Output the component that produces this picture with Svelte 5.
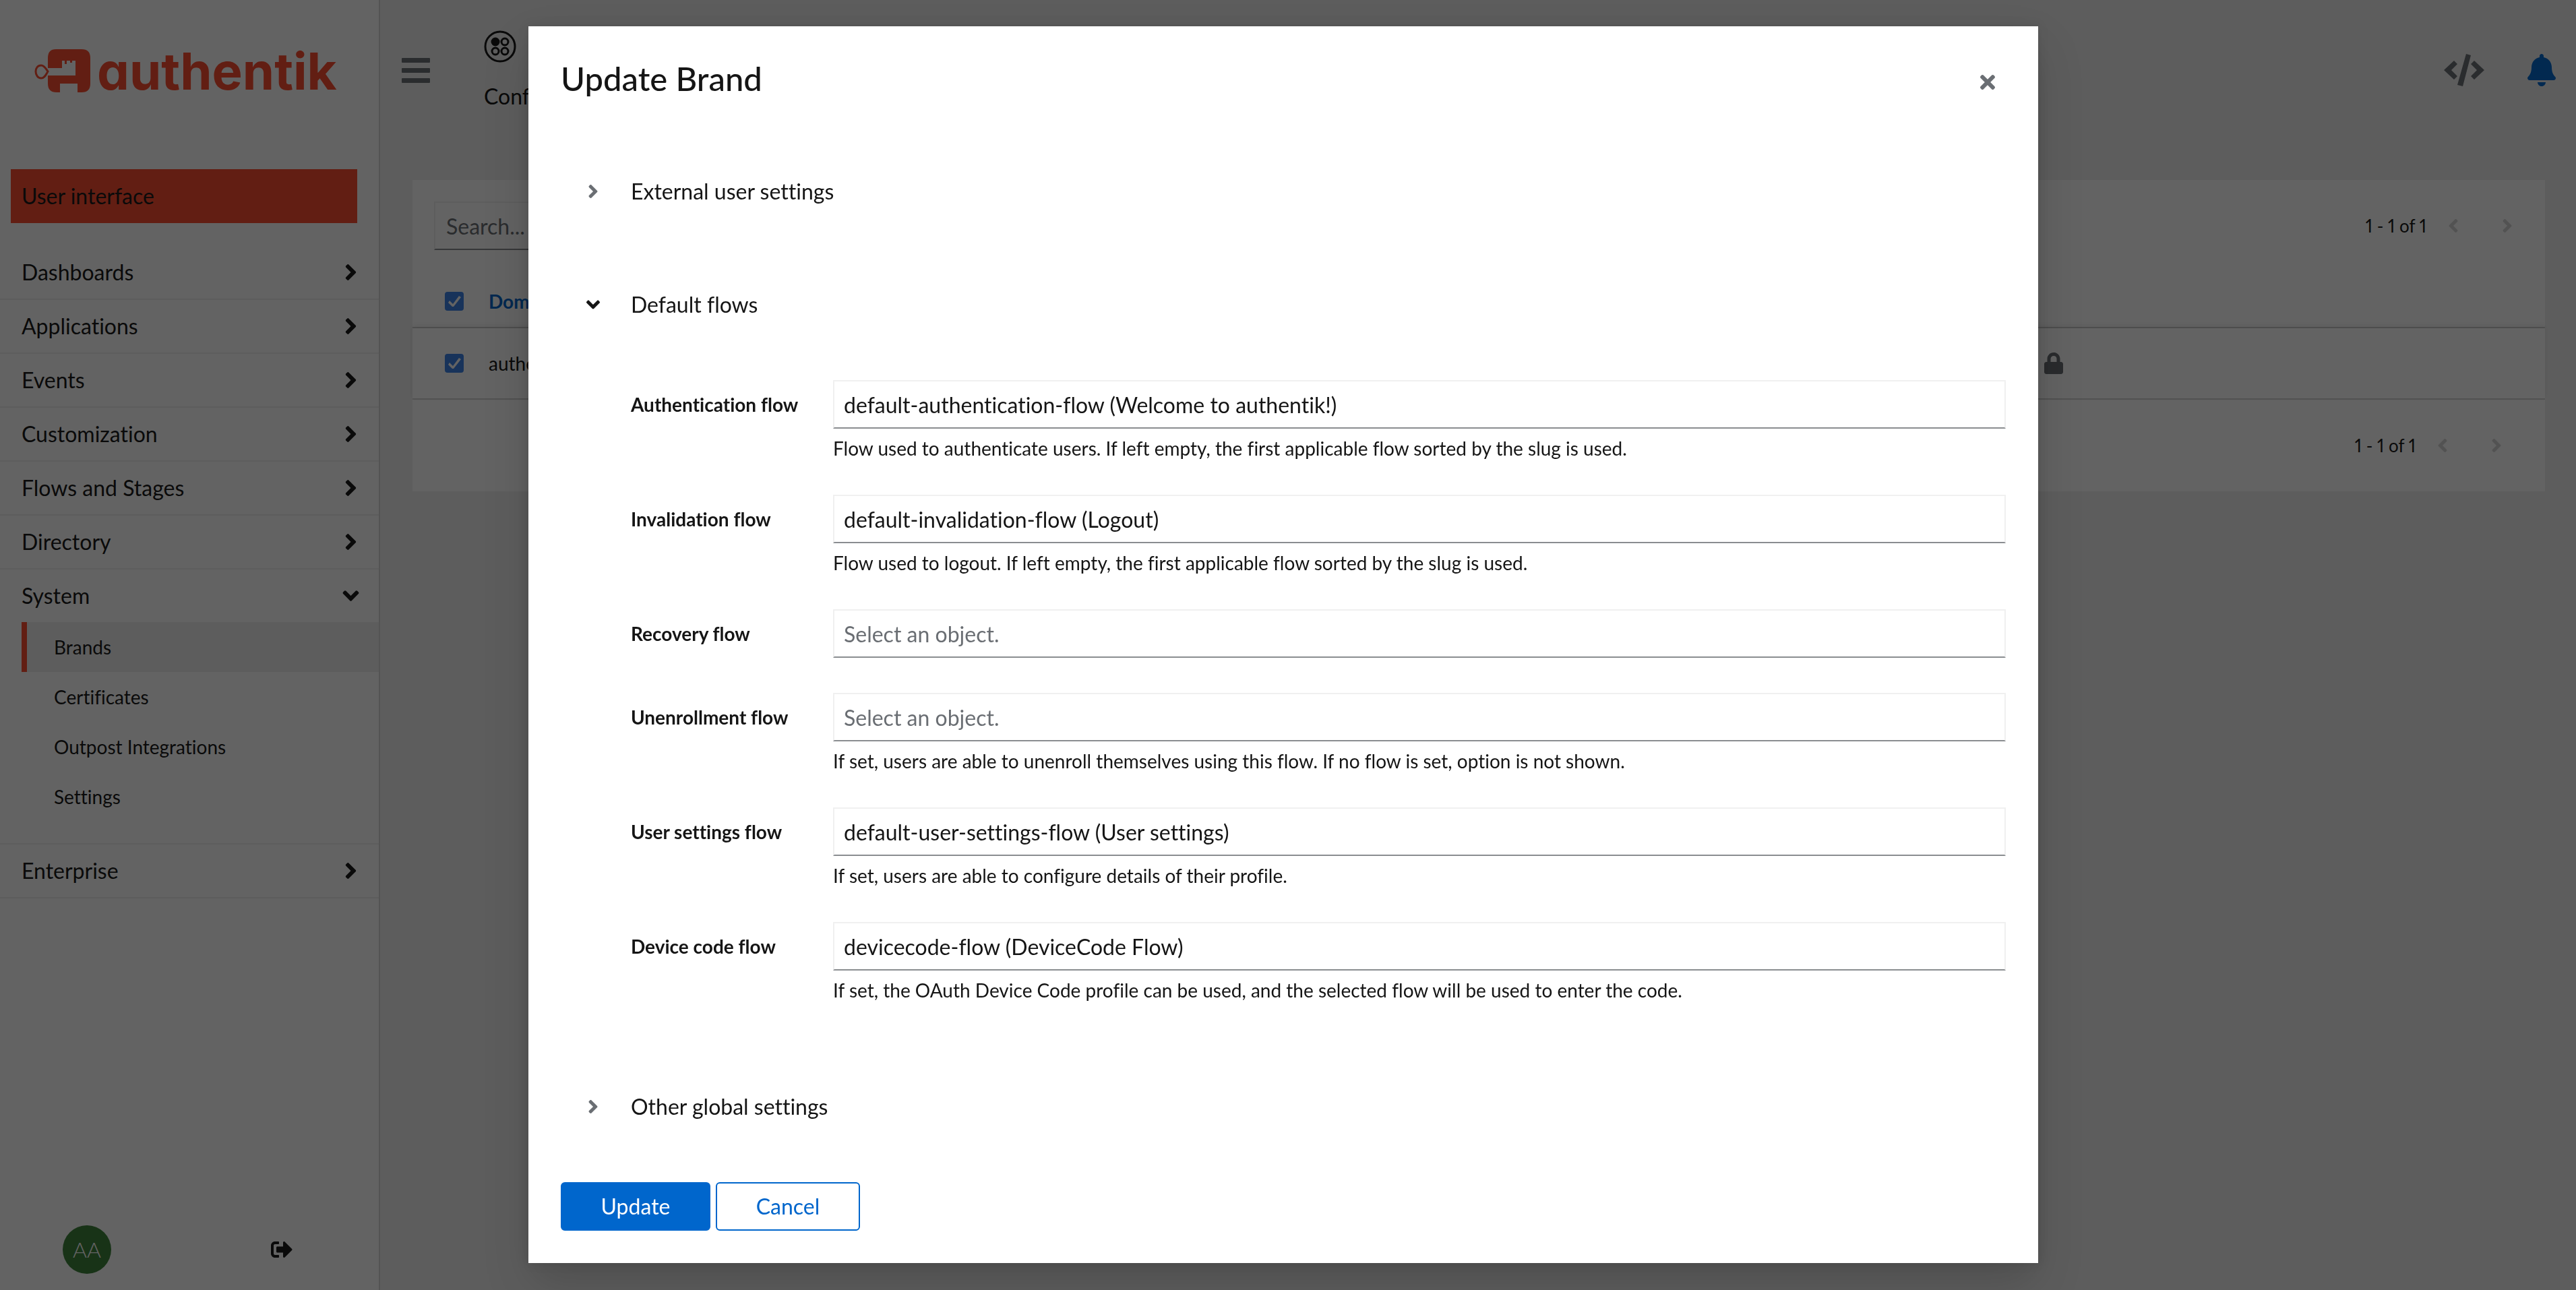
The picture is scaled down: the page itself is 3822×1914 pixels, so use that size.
<script>
  const sections = ['Dashboards', 'Applications', 'Events', 'Customization', 'Flows and Stages', 'Directory'];
  const systemPages = ['Brands', 'Certificates', 'Outpost Integrations', 'Settings'];

  let flows = $state([
    {
      id: 'authentication',
      label: 'Authentication flow',
      value: 'default-authentication-flow (Welcome to authentik!)',
      help: 'Flow used to authenticate users. If left empty, the first applicable flow sorted by the slug is used.'
    },
    {
      id: 'invalidation',
      label: 'Invalidation flow',
      value: 'default-invalidation-flow (Logout)',
      help: 'Flow used to logout. If left empty, the first applicable flow sorted by the slug is used.'
    },
    { id: 'recovery', label: 'Recovery flow', value: '', help: '' },
    {
      id: 'unenrollment',
      label: 'Unenrollment flow',
      value: '',
      help: 'If set, users are able to unenroll themselves using this flow. If no flow is set, option is not shown.'
    },
    {
      id: 'user-settings',
      label: 'User settings flow',
      value: 'default-user-settings-flow (User settings)',
      help: 'If set, users are able to configure details of their profile.'
    },
    {
      id: 'device-code',
      label: 'Device code flow',
      value: 'devicecode-flow (DeviceCode Flow)',
      help: 'If set, the OAuth Device Code profile can be used, and the selected flow will be used to enter the code.'
    }
  ]);
</script>

{#snippet angle(kind)}
  <svg class="angle {kind}" viewBox="0 0 256 512" aria-hidden="true">
    <path d="M224.3 273l-136 136c-9.4 9.4-24.6 9.4-33.9 0l-22.6-22.6c-9.4-9.4-9.4-24.6 0-33.9l96.4-96.4-96.4-96.4c-9.4-9.4-9.4-24.6 0-33.9L54.3 103c9.4-9.4 24.6-9.4 33.9 0l136 136c9.5 9.4 9.5 24.6.1 34z" />
  </svg>
{/snippet}

{#snippet pagination()}
  <div class="pagination">
    <span>1 - 1 of 1</span>
    <button type="button" aria-label="Previous page" disabled>{@render angle('left')}</button>
    <button type="button" aria-label="Next page" disabled>{@render angle('right')}</button>
  </div>
{/snippet}

<div class="page">
  <aside class="sidebar">
    <a class="brand" href="#home">
      <svg class="mark" viewBox="0 0 83 64" aria-hidden="true">
        <path d="M32 0H70Q83 0 83 13V51Q83 64 70 64H64V51H38V64H33Q20 64 20 51V39H61V17H56V20H53V17H48V22H45V17H41V28H20V13Q20 0 32 0Z" />
        <path class="ring" d="M10 24C15 24 17 29 20 33C17 38 15 43 10 43C5 43 2 38 2 33S5 24 10 24Z" />
      </svg>
      <span>authentik</span>
    </a>
    <nav>
      <a class="interface" href="#user">User interface</a>
      {#each sections as section}
        <button type="button" class="section">{section}{@render angle('right')}</button>
      {/each}
      <div class="open">
        <button type="button" class="section" aria-expanded="true">System{@render angle('down')}</button>
        {#each systemPages as name, i}
          <a class="sub" class:current={i === 0} href="#{name}">{name}</a>
        {/each}
      </div>
      <button type="button" class="section">Enterprise{@render angle('right')}</button>
    </nav>
    <div class="account">
      <span class="avatar">AA</span>
      <a href="#logout" aria-label="Sign out">
        <svg class="signout" viewBox="0 0 512 512" aria-hidden="true">
          <path d="M497 273L329 441c-15 15-41 4.5-41-17v-96H152c-13.3 0-24-10.7-24-24v-96c0-13.3 10.7-24 24-24h136V88c0-21.4 25.9-32 41-17l168 168c9.3 9.4 9.3 24.6 0 34zM192 436v-40c0-6.6-5.4-12-12-12H96c-17.7 0-32-14.3-32-32V160c0-17.7 14.3-32 32-32h84c6.6 0 12-5.4 12-12V76c0-6.6-5.4-12-12-12H96c-53 0-96 43-96 96v192c0 53 43 96 96 96h84c6.6 0 12-5.4 12-12z" />
        </svg>
      </a>
    </div>
  </aside>

  <main>
    <header class="masthead">
      <button type="button" aria-label="Toggle navigation">
        <svg class="bars" viewBox="0 0 42 37" aria-hidden="true">
          <rect width="42" height="7" rx="1" /><rect y="15" width="42" height="7" rx="1" /><rect y="30" width="42" height="7" rx="1" />
        </svg>
      </button>
      <div class="heading">
        <svg viewBox="0 0 48 48" aria-label="Brands">
          <circle cx="24" cy="24" r="22" /><circle class="dot" cx="17" cy="17" r="5" /><circle cx="31" cy="17" r="5" />
          <circle cx="17" cy="31" r="5" /><circle cx="31" cy="31" r="5" />
        </svg>
        <p>Config</p>
      </div>
      <button type="button" aria-label="API drawer">
        <svg class="code" viewBox="0 0 60 48" aria-hidden="true">
          <path d="M0 24L15 10L20 15L11 24L20 33L15 38ZM33 0L40 2L28 48L20 46ZM60 24L45 10L40 15L49 24L40 33L45 38Z" />
        </svg>
      </button>
      <button type="button" class="alerts" aria-label="Notifications">
        <svg class="bell" viewBox="0 0 448 512" aria-hidden="true">
          <path d="M224 512c35.32 0 63.97-28.65 63.97-64H160.03c0 35.35 28.65 64 63.97 64zm215.39-149.71c-19.32-20.76-55.47-51.99-55.47-154.29 0-77.7-54.48-139.9-127.94-155.16V32c0-17.67-14.32-32-31.98-32s-31.98 14.33-31.98 32v20.84C118.56 68.1 64.08 130.3 64.08 208c0 102.3-36.15 133.53-55.47 154.29-6 6.45-8.66 14.16-8.61 21.71.11 16.4 12.98 32 32.1 32h383.8c19.12 0 32-15.6 32.1-32 .05-7.55-2.61-15.27-8.61-21.71z" />
        </svg>
      </button>
    </header>

    <section class="panel">
      <div class="toolbar">
        <input type="search" aria-label="Search" placeholder="Search..." />
        {@render pagination()}
      </div>
      <table>
        <thead>
          <tr>
            <th class="check"><input type="checkbox" aria-label="Select all" checked /></th>
            <th>Domain</th>
            <th class="actions"></th>
          </tr>
        </thead>
        <tbody>
          <tr>
            <td class="check"><input type="checkbox" aria-label="Select row" checked /></td>
            <td>authentik</td>
            <td class="actions">
              <button type="button" aria-label="Permissions">
                <svg class="lock" viewBox="0 0 448 512" aria-hidden="true">
                  <path d="M400 224h-24v-72C376 68.2 307.8 0 224 0S72 68.2 72 152v72H48c-26.5 0-48 21.5-48 48v192c0 26.5 21.5 48 48 48h352c26.5 0 48-21.5 48-48V272c0-26.5-21.5-48-48-48zm-104 0H152v-72c0-39.7 32.3-72 72-72s72 32.3 72 72v72z" />
                </svg>
              </button>
            </td>
          </tr>
        </tbody>
      </table>
      <div class="toolbar foot">{@render pagination()}</div>
    </section>
  </main>
</div>

<div class="backdrop">
  <form class="modal" role="dialog" aria-labelledby="modal-title">
    <header>
      <h1 id="modal-title">Update Brand</h1>
      <button type="button" class="close" aria-label="Close">
        <svg viewBox="0 0 352 512" aria-hidden="true">
          <path d="M242.72 256l100.07-100.07c12.28-12.28 12.28-32.19 0-44.48l-22.24-22.24c-12.28-12.28-32.19-12.28-44.48 0L176 189.28 75.93 89.21c-12.28-12.28-32.19-12.28-44.48 0L9.21 111.45c-12.28 12.28-12.28 32.19 0 44.48L109.28 256 9.21 356.07c-12.28 12.28-12.28 32.19 0 44.48l22.24 22.24c12.28 12.28 32.2 12.28 44.48 0L176 322.72l100.07 100.07c12.28 12.28 32.2 12.28 44.48 0l22.24-22.24c12.28-12.28 12.28-32.19 0-44.48L242.72 256z" />
        </svg>
      </button>
    </header>

    <div class="groups">
      <button type="button" class="toggle" aria-expanded="false">{@render angle('right')}External user settings</button>
      <div>
        <button type="button" class="toggle" aria-expanded="true">{@render angle('down')}Default flows</button>
        <div class="fields">
          {#each flows as flow (flow.id)}
            <div class="field">
              <label for={flow.id}>{flow.label}</label>
              <div>
                <input id={flow.id} type="text" placeholder="Select an object." bind:value={flow.value} />
                {#if flow.help}<p>{flow.help}</p>{/if}
              </div>
            </div>
          {/each}
        </div>
      </div>
      <button type="button" class="toggle" aria-expanded="false">{@render angle('right')}Other global settings</button>
    </div>

    <footer>
      <button type="submit" class="primary">Update</button>
      <button type="button" class="secondary">Cancel</button>
    </footer>
  </form>
</div>

<style>
  :global(body) {
    margin: 0;
    font: 32px/48px Lato, 'Open Sans', sans-serif;
    font-variant-ligatures: none;
    color: #151515;
    background: #f0f0f0;
  }
  :global(*) { box-sizing: border-box; }

  button, input { font: inherit; font-variant-ligatures: none; color: inherit; }
  button { background: none; border: 0; padding: 0; cursor: pointer; }
  a { color: inherit; text-decoration: none; }
  svg { display: block; flex: none; fill: currentColor; }
  p, h1 { margin: 0; }

  .angle { height: 32px; width: 16px; }
  .angle.down { transform: rotate(90deg); }
  .angle.left { transform: rotate(180deg); }

  .page { display: flex; min-height: 100vh; }

  .sidebar {
    width: 564px;
    flex: none;
    display: flex;
    flex-direction: column;
    background: #fff;
    border-right: 2px solid #d8d8d8;
  }
  .brand {
    height: 210px;
    padding-left: 51px;
    display: flex;
    align-items: center;
    gap: 10px;
    color: #fd4b2d;
    font: 700 76px/90px Inter, sans-serif;
    font-feature-settings: 'cv11';
  }
  .mark { width: 83px; height: 64px; }
  .ring { fill: none; stroke: currentColor; stroke-width: 3; }

  nav { padding-top: 41px; flex: 1; }
  .interface {
    display: block;
    margin: 0 32px 34px 16px;
    padding: 16px;
    background: #fd4b2d;
  }
  .section {
    width: 100%;
    height: 80px;
    padding: 0 32px;
    display: flex;
    align-items: center;
    justify-content: space-between;
    border-bottom: 2px solid #f0f0f0;
  }
  .section .angle { height: 38px; width: 19px; }
  .open { padding-bottom: 32px; border-bottom: 2px solid #f0f0f0; }
  .open .section { height: 78px; border: 0; }
  .sub {
    display: block;
    margin-left: 32px;
    padding: 16px 40px;
    border-left: 8px solid transparent;
    font-size: 28px;
    line-height: 42px;
  }
  .current { background: #f0f0f0; border-color: #fd4b2d; }

  .account {
    display: flex;
    justify-content: space-between;
    align-items: center;
    padding: 24px 128px 24px 93px;
  }
  .avatar {
    width: 72px;
    border-radius: 50%;
    background: #3b8039;
    color: #fff;
    font-weight: 300;
    line-height: 72px;
    text-align: center;
  }
  .signout { width: 32px; height: 32px; }

  main { flex: 1; min-width: 0; }
  .masthead {
    height: 208px;
    padding: 0 30px 0 32px;
    display: flex;
    align-items: center;
    color: #6a6e73;
  }
  .bars { width: 42px; height: 37px; }
  .heading { flex: 1; padding: 4px 0 0 80px; color: #151515; }
  .heading svg { width: 48px; height: 48px; margin-bottom: 26px; fill: none; stroke: currentColor; stroke-width: 3; }
  .heading .dot { fill: currentColor; }
  .code { width: 60px; height: 48px; }
  .bell { width: 42px; height: 48px; }
  .alerts { margin-left: 64px; color: #06c; }

  .panel { margin: 59px 46px 48px 48px; background: #fff; }
  .toolbar {
    height: 136px;
    padding: 0 16px 0 32px;
    display: flex;
    align-items: center;
    justify-content: space-between;
  }
  .foot { justify-content: flex-end; padding-right: 32px; }
  input[type='search'], .field input {
    height: 72px;
    padding: 0 14px;
    border: 2px solid #f0f0f0;
    border-bottom-color: #8a8d90;
    border-radius: 0;
    background: #fff;
    outline: 0;
  }
  input[type='search'] { width: 480px; padding: 0 16px; }
  input::placeholder { color: #6a6e73; opacity: 1; }
  .pagination { display: flex; align-items: center; font-size: 26px; font-variant-numeric: proportional-nums; }
  .pagination button { width: 80px; display: flex; justify-content: center; color: #d2d2d2; }

  table { width: 100%; border-collapse: separate; border-spacing: 0; table-layout: fixed; font-size: 28px; line-height: 42px; }
  th, td { padding: 0; text-align: left; border-bottom: 2px solid #d2d2d2; }
  th { height: 84px; padding-top: 6px; color: #06c; font-weight: 700; }
  td { height: 106px; }
  tbody tr { box-shadow: 0 -4px 8px rgba(3, 3, 3, 0.08); }
  .check { width: 113px; padding-left: 48px; }
  .actions { width: 24%; padding-left: 16px; color: #6a6e73; }
  .actions button { display: block; }
  .lock { width: 28px; height: 32px; }
  input[type='checkbox'] {
    appearance: none;
    display: block;
    width: 28px;
    height: 28px;
    margin: 0;
    border-radius: 4px;
    background: #3b82e8;
  }
  input[type='checkbox']::before {
    content: '';
    display: block;
    height: 28px;
    background: #fff;
    clip-path: polygon(5px 16px, 7px 13px, 12px 18px, 21px 6px, 24px 8px, 13px 22px, 11px 22px);
  }

  .backdrop {
    position: fixed;
    inset: 0;
    padding: 0 14px 1px 0;
    display: flex;
    align-items: center;
    justify-content: center;
    background: rgba(3, 3, 3, 0.62);
  }
  .modal {
    width: 2240px;
    max-width: 95%;
    padding: 48px;
    background: #fff;
    box-shadow: 0 32px 64px rgba(3, 3, 3, 0.16), 0 0 16px rgba(3, 3, 3, 0.1);
  }
  .modal header { display: flex; justify-content: space-between; padding-bottom: 103px; }
  h1 { font-size: 49px; line-height: 58px; font-weight: 500; }
  .close { padding: 12px 16px 0 0; color: #6a6e73; align-self: center; }
  .close svg { width: 22px; height: 32px; }
  .groups { display: flex; flex-direction: column; gap: 96px; }
  .toggle { height: 72px; padding-left: 40px; display: flex; align-items: center; gap: 48px; }
  .toggle .angle { color: #6a6e73; }
  .toggle .down { color: #151515; }
  .fields { display: flex; flex-direction: column; gap: 48px; padding: 76px 0 20px 104px; }
  .field { display: grid; grid-template-columns: 252px 1fr; column-gap: 48px; min-height: 76px; }
  .field label { padding-top: 15px; font-size: 28px; line-height: 42px; font-weight: 700; white-space: nowrap; }
  .field input { width: 100%; display: block; }
  .field p { margin-top: 8px; font-size: 28px; line-height: 42px; }
  footer { display: flex; gap: 8px; padding-top: 76px; }
  footer button { height: 72px; border: 2px solid #06c; border-radius: 6px; }
  .primary { width: 222px; background: #06c; color: #fff; }
  .secondary { width: 214px; color: #06c; }
</style>
